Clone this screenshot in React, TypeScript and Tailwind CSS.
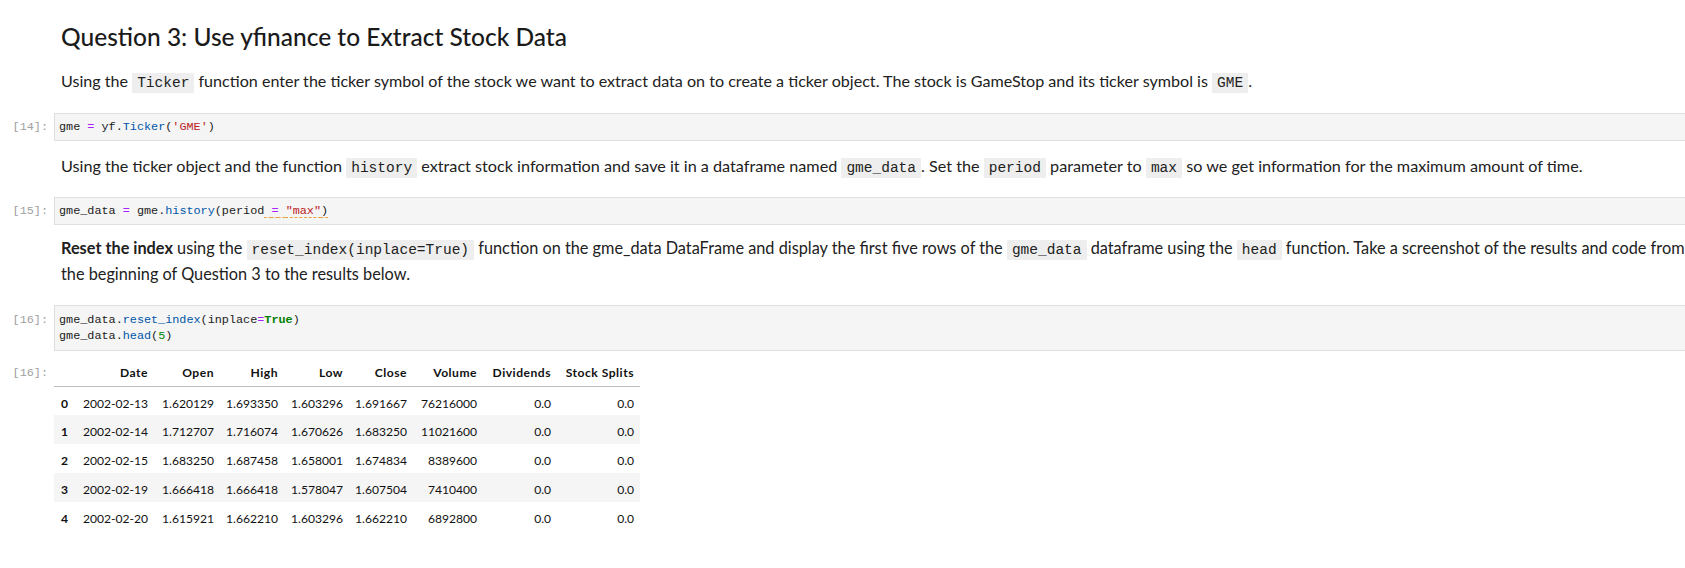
import React from 'react';

const mono = "font-['Liberation_Mono','DejaVu_Sans_Mono',monospace]";

function Prompt({ label }: { label: string }) {
  return (
    <div className={`w-[54px] shrink-0 pr-[6px] text-right text-[11.8px] leading-[16px] text-[#a0a0a0] ${mono}`}>
      {label}
    </div>
  );
}

function Code({ children }: { children: React.ReactNode }) {
  return (
    <code className={`rounded-[1px] bg-[#eeeeee] px-[5px] py-[2px] text-[14.5px] text-[#212121] ${mono}`}>{children}</code>
  );
}

function CodeCell({ label, lines, tall }: { label: string; lines: React.ReactNode[]; tall?: boolean }) {
  return (
    <div className="flex">
      <div className={tall ? 'pt-[7px]' : 'pt-[6px]'}>
        <Prompt label={label} />
      </div>
      <div
        className={`w-[1640px] shrink-0 border border-[#dfdfdf] bg-[#f5f5f5] px-[4px] ${tall ? 'py-[6px]' : 'py-[5px]'} text-[11.8px] leading-[16px] text-[#212121] ${mono}`}
      >
        {lines.map((line, i) => (
          <div key={i} className="whitespace-pre">
            {line}
          </div>
        ))}
      </div>
    </div>
  );
}

const op = 'text-[#aa22ff]';
const prop = 'text-[#0055aa]';
const str = 'text-[#ba2121]';

const columns = [
  { key: 'idx', label: '', w: 'w-[20px]' },
  { key: 'Date', label: 'Date', w: 'w-[79px]' },
  { key: 'Open', label: 'Open', w: 'w-[66px]' },
  { key: 'High', label: 'High', w: 'w-[64px]' },
  { key: 'Low', label: 'Low', w: 'w-[65px]' },
  { key: 'Close', label: 'Close', w: 'w-[64px]' },
  { key: 'Volume', label: 'Volume', w: 'w-[70px]' },
  { key: 'Dividends', label: 'Dividends', w: 'w-[74px]' },
  { key: 'Splits', label: 'Stock Splits', w: 'w-[83px]' },
];

const rows = [
  ['0', '2002-02-13', '1.620129', '1.693350', '1.603296', '1.691667', '76216000', '0.0', '0.0'],
  ['1', '2002-02-14', '1.712707', '1.716074', '1.670626', '1.683250', '11021600', '0.0', '0.0'],
  ['2', '2002-02-15', '1.683250', '1.687458', '1.658001', '1.674834', '8389600', '0.0', '0.0'],
  ['3', '2002-02-19', '1.666418', '1.666418', '1.578047', '1.607504', '7410400', '0.0', '0.0'],
  ['4', '2002-02-20', '1.615921', '1.662210', '1.603296', '1.662210', '6892800', '0.0', '0.0'],
];

export default function App() {
  return (
    <div className="h-[568px] w-[1685px] overflow-hidden bg-white font-['Lato','Noto_Sans',sans-serif] text-[#212121]">
      <div className="pt-[22px]">
        {/* markdown: heading + intro */}
        <div className="pl-[61px]">
          <h2 className="text-[24.5px] font-medium leading-[30px] text-[#1a1a1a]">Question 3: Use yfinance to Extract Stock Data</h2>
          <p className="mt-[17px] whitespace-nowrap text-[16.1px] leading-[24px]">
            Using the <Code>Ticker</Code> function enter the ticker symbol of the stock we want to extract data on to create a ticker object. The stock is GameStop and its ticker symbol is <Code>GME</Code>.
          </p>
        </div>

        <div className="mt-[18px]">
          <CodeCell
            label="[14]:"
            lines={[
              <>
                gme <span className={op}>=</span> yf.<span className={prop}>Ticker</span>(<span className={str}>'GME'</span>)
              </>,
            ]}
          />
        </div>

        <p className="mt-[13px] whitespace-nowrap pl-[61px] text-[16.2px] leading-[24px]">
          Using the ticker object and the function <Code>history</Code> extract stock information and save it in a dataframe named <Code>gme_data</Code>. Set the <Code>period</Code> parameter to <Code>max</Code> so we get information for the maximum amount of time.
        </p>

        <div className="mt-[17px]">
          <CodeCell
            label="[15]:"
            lines={[
              <>
                gme_data <span className={op}>=</span> gme.<span className={prop}>history</span>(period
                <span className="underline decoration-[#e9a23b] decoration-dashed underline-offset-[3px]">
                  {' '}
                  <span className={op}>=</span> <span className={str}>"max"</span>)
                </span>
              </>,
            ]}
          />
        </div>

        <div className="mt-[11px] pl-[61px] text-[16.3px] leading-[24px]">
          <div className="whitespace-nowrap">
            <b className="font-bold">Reset the index</b> using the <Code>reset_index(inplace=True)</Code> function on the gme_data DataFrame and display the first five rows of the <Code>gme_data</Code> dataframe using the <Code>head</Code> function. Take a screenshot of the results and code from
          </div>
          <div>the beginning of Question 3 to the results below.</div>
        </div>

        <div className="mt-[19px]">
          <CodeCell
            tall
            label="[16]:"
            lines={[
              <>
                gme_data.<span className={prop}>reset_index</span>(inplace<span className={op}>=</span>
                <span className="font-bold text-[#008000]">True</span>)
              </>,
              <>
                gme_data.<span className={prop}>head</span>(<span className="text-[#008800]">5</span>)
              </>,
            ]}
          />
        </div>

        {/* output */}
        <div className="mt-[9px] flex">
          <div className="pt-[5px]">
            <Prompt label="[16]:" />
          </div>
          <table className="border-collapse text-[12.1px] leading-[18px] text-[#111]">
            <thead>
              <tr className="h-[26px] border-b border-[#bdbdbd]">
                {columns.map((c) => (
                  <th key={c.key} className={`${c.w} whitespace-nowrap px-[6px] text-right align-middle font-bold tracking-[0.5px]`}>
                    {c.label}
                  </th>
                ))}
              </tr>
            </thead>
            <tbody>
              {rows.map((r, i) => (
                <tr key={r[0]} className={`h-[29px] ${i % 2 === 1 ? 'bg-[#f5f5f5]' : 'bg-white'}`}>
                  {r.map((cell, j) => (
                    <td
                      key={j}
                      className={`whitespace-nowrap pt-[8px] pb-0 align-top ${j === 0 ? 'px-[7px] text-left font-bold' : 'px-[6px] text-right'}`}
                    >
                      {cell}
                    </td>
                  ))}
                </tr>
              ))}
            </tbody>
          </table>
        </div>
      </div>
    </div>
  );
}
